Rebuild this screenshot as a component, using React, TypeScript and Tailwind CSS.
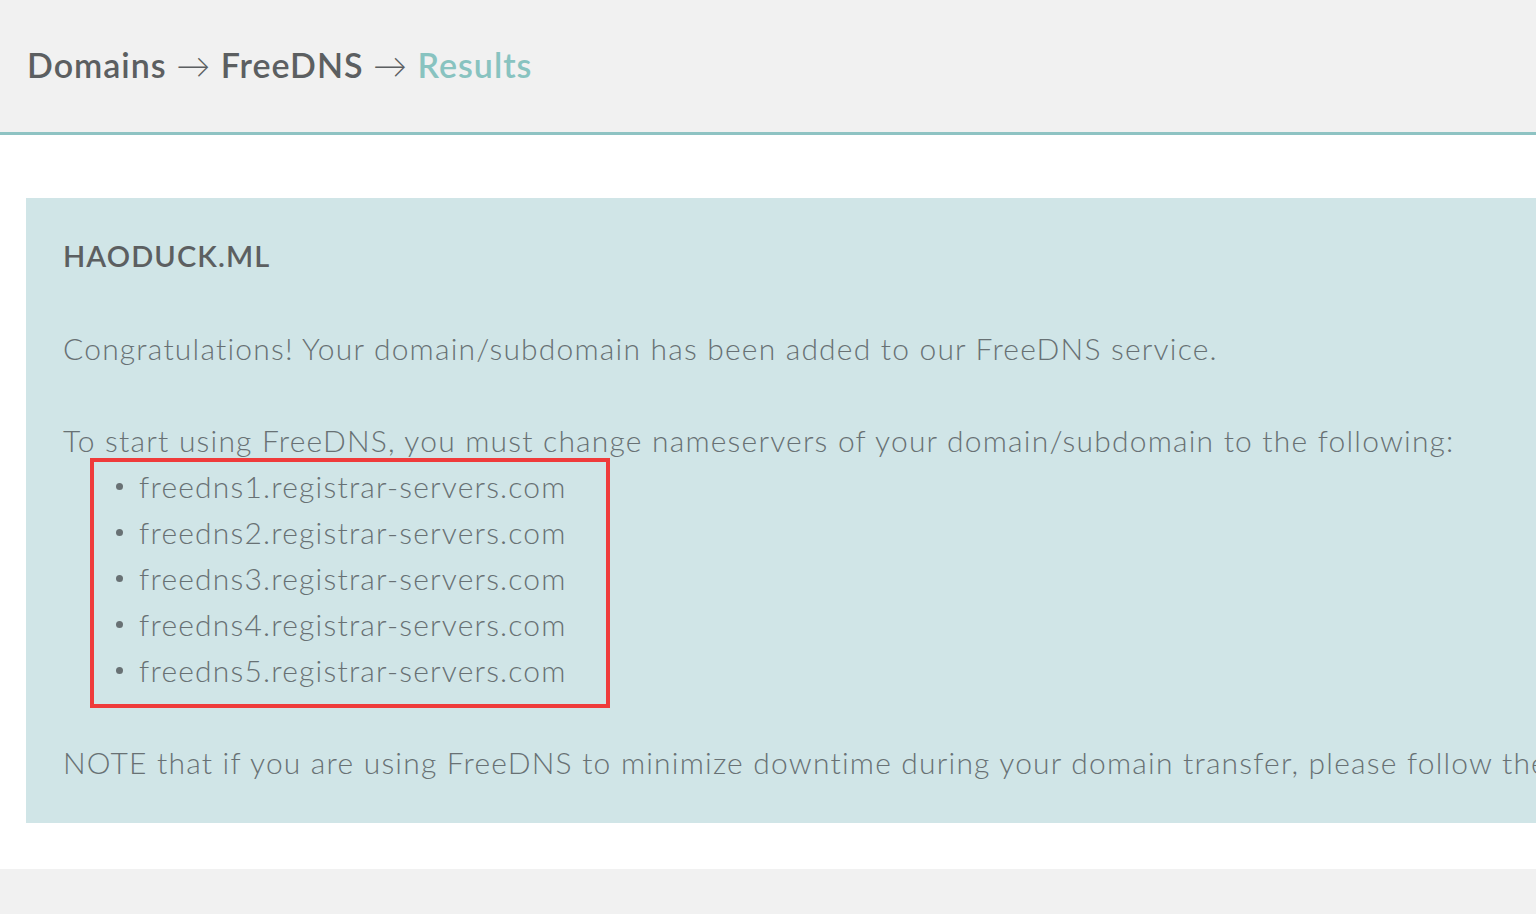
import React from "react";

const servers = [1, 2, 3, 4, 5].map((n) => `freedns${n}.registrar-servers.com`);

export default function App() {
  return (
    <div className="w-[1536px] h-[914px] overflow-hidden bg-white flex flex-col" style={{ fontFamily: "Lato, 'Open Sans', sans-serif" }}>
      <header className="h-[135px] shrink-0 bg-[#f1f1f1] border-b-[3px] border-[#8ec3c3] flex items-center pl-[27px] pb-[3px]">
        <h1 className="text-[34px] font-semibold text-[#5c5f61] tracking-[1px]">
          Domains <span className="font-light">→</span> FreeDNS <span className="font-light">→</span>{" "}
          <span className="text-[#88c3c0]">Results</span>
        </h1>
      </header>
      <main className="h-[734px] shrink-0 pt-[63px] pl-[26px]">
        <section className="w-[1700px] bg-[#d0e5e7] pl-[37px] pt-[35px] pb-[38px] text-[30px] leading-[46px] text-[#687174] font-light tracking-[1.2px]">
          <h2 className="font-semibold text-[29px] text-[#5c5f61] tracking-[1.1px]">HAODUCK.ML</h2>
          <p className="mt-[46px]">Congratulations! Your domain/subdomain has been added to our FreeDNS service.</p>
          <p className="mt-[46px]">To start using FreeDNS, you must change nameservers of your domain/subdomain to the following:</p>
          <ul className="relative">
            <div className="absolute left-[27px] top-[-5px] w-[520px] h-[250px] border-4 border-[#ef3b3b]" />
            {servers.map((s) => (
              <li key={s} className="flex items-center">
                <span className="ml-[53px] w-[7px] h-[7px] rounded-full bg-[#687174]" />
                <span className="ml-[16px]">{s}</span>
              </li>
            ))}
          </ul>
          <p className="mt-[46px] whitespace-nowrap">
            NOTE that if you are using FreeDNS to minimize downtime during your domain transfer, please follow the instructions below.
          </p>
        </section>
      </main>
      <footer className="flex-1 bg-[#f1f1f1]" />
    </div>
  );
}
